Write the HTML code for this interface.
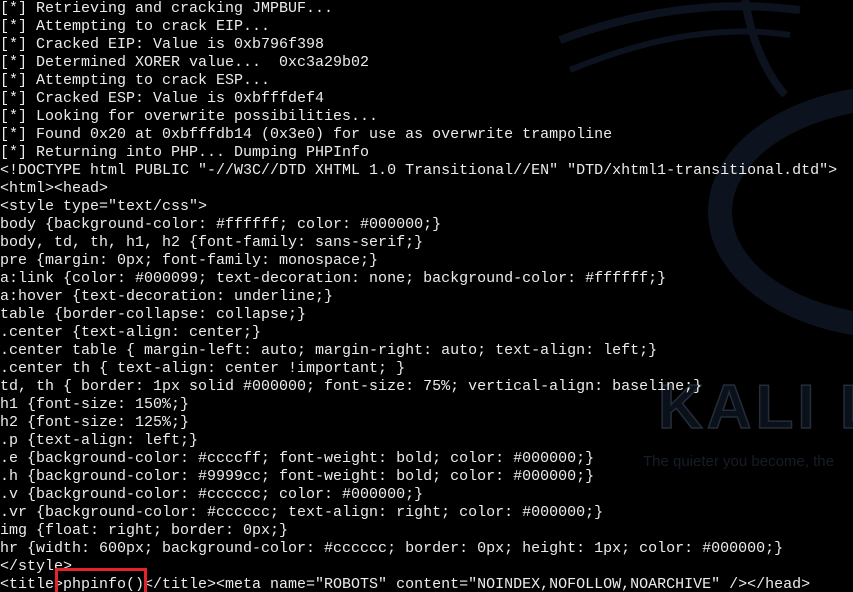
<!DOCTYPE html>
<html><head><meta charset="utf-8"><style>
html,body{margin:0;padding:0;background:#000;width:853px;height:592px;overflow:hidden;position:relative}
pre{position:absolute;left:0;top:0;margin:0;font-family:"Liberation Mono",monospace;font-size:15px;line-height:18px;color:#ececec;white-space:pre;z-index:2}
.kali{position:absolute;left:658px;top:372px;font-family:"Liberation Sans",sans-serif;font-weight:bold;font-size:62px;color:#0a111b;-webkit-text-stroke:1.5px #252d38;letter-spacing:4px;z-index:1;white-space:nowrap}
.tag{position:absolute;left:643px;top:453px;font-family:"Liberation Sans",sans-serif;font-size:15px;color:#161d28;z-index:1;white-space:nowrap}
.box{position:absolute;left:55px;top:568px;width:86px;height:30px;border:3px solid #e3242b;z-index:3}
</style></head><body>
<svg width="853" height="592" style="position:absolute;left:0;top:0;z-index:0">
<g fill="none" stroke="#0c131e">
<path d="M560 40 Q680 -5 800 10" stroke-width="8"/>
<path d="M570 70 Q690 20 790 35" stroke-width="6"/>
<path d="M745 0 Q755 60 785 95" stroke-width="8"/>
<ellipse cx="900" cy="212" rx="180" ry="115" stroke-width="24"/>
</g>
</svg>
<div class="kali">KALI L</div>
<div class="tag">The quieter you become, the</div>
<pre>[*] Retrieving and cracking JMPBUF...
[*] Attempting to crack EIP...
[*] Cracked EIP: Value is 0xb796f398
[*] Determined XORER value...  0xc3a29b02
[*] Attempting to crack ESP...
[*] Cracked ESP: Value is 0xbfffdef4
[*] Looking for overwrite possibilities...
[*] Found 0x20 at 0xbfffdb14 (0x3e0) for use as overwrite trampoline
[*] Returning into PHP... Dumping PHPInfo
&lt;!DOCTYPE html PUBLIC "-//W3C//DTD XHTML 1.0 Transitional//EN" "DTD/xhtml1-transitional.dtd"&gt;
&lt;html&gt;&lt;head&gt;
&lt;style type="text/css"&gt;
body {background-color: #ffffff; color: #000000;}
body, td, th, h1, h2 {font-family: sans-serif;}
pre {margin: 0px; font-family: monospace;}
a:link {color: #000099; text-decoration: none; background-color: #ffffff;}
a:hover {text-decoration: underline;}
table {border-collapse: collapse;}
.center {text-align: center;}
.center table { margin-left: auto; margin-right: auto; text-align: left;}
.center th { text-align: center !important; }
td, th { border: 1px solid #000000; font-size: 75%; vertical-align: baseline;}
h1 {font-size: 150%;}
h2 {font-size: 125%;}
.p {text-align: left;}
.e {background-color: #ccccff; font-weight: bold; color: #000000;}
.h {background-color: #9999cc; font-weight: bold; color: #000000;}
.v {background-color: #cccccc; color: #000000;}
.vr {background-color: #cccccc; text-align: right; color: #000000;}
img {float: right; border: 0px;}
hr {width: 600px; background-color: #cccccc; border: 0px; height: 1px; color: #000000;}
&lt;/style&gt;
&lt;title&gt;phpinfo()&lt;/title&gt;&lt;meta name="ROBOTS" content="NOINDEX,NOFOLLOW,NOARCHIVE" /&gt;&lt;/head&gt;</pre>
<div class="box"></div>
</body></html>
